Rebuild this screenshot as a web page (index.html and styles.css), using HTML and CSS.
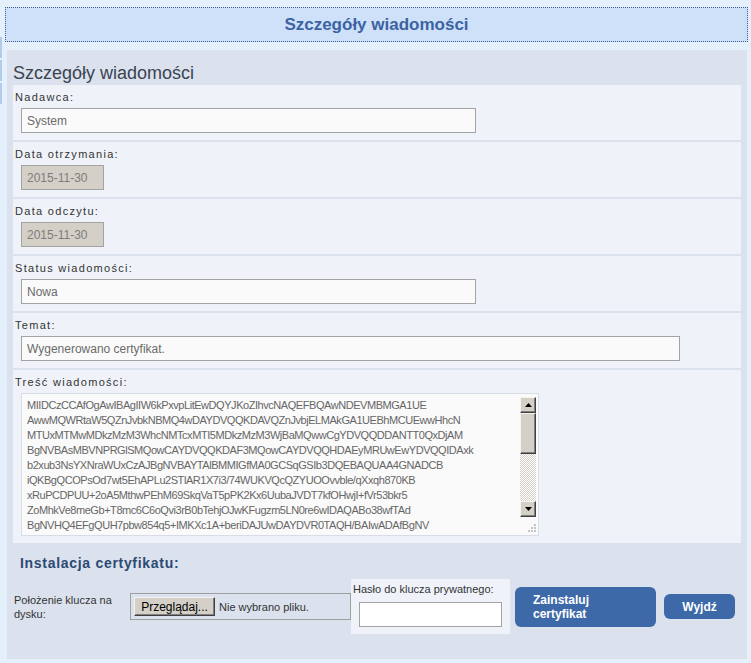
FILE: index.html
```html
<!DOCTYPE html>
<html lang="pl">
<head>
    <meta charset="UTF-8">
    <title>Szczegóły wiadomości</title>
    <link rel="stylesheet" href="styles.css">
</head>
<body>
    <div class="page">
        <div class="side-strip"><span></span><span></span><span></span></div>

        <div class="content">
            <div class="title-bar">
                <h1>Szczegóły wiadomości</h1>
            </div>

            <div class="panel">
                <h2>Szczegóły wiadomości</h2>

                <div class="field">
                    <label>Nadawca:</label>
                    <input class="text-input wide" type="text" value="System" readonly>
                </div>

                <div class="field">
                    <label>Data otrzymania:</label>
                    <input class="text-input date" type="text" value="2015-11-30" readonly>
                </div>

                <div class="field">
                    <label>Data odczytu:</label>
                    <input class="text-input date" type="text" value="2015-11-30" readonly>
                </div>

                <div class="field">
                    <label>Status wiadomości:</label>
                    <input class="text-input wide" type="text" value="Nowa" readonly>
                </div>

                <div class="field">
                    <label>Temat:</label>
                    <input class="text-input wider" type="text" value="Wygenerowano certyfikat." readonly>
                </div>

                <div class="field">
                    <label>Treść wiadomości:</label>
                    <div class="message-box">
                        <div class="message-text">MIIDCzCCAfOgAwIBAgIIW6kPxvpLitEwDQYJKoZIhvcNAQEFBQAwNDEVMBMGA1UE
AwwMQWRtaW5QZnJvbkNBMQ4wDAYDVQQKDAVQZnJvbjELMAkGA1UEBhMCUEwwHhcN
MTUxMTMwMDkzMzM3WhcNMTcxMTI5MDkzMzM3WjBaMQwwCgYDVQQDDANTT0QxDjAM
BgNVBAsMBVNPRGlSMQowCAYDVQQKDAF3MQowCAYDVQQHDAEyMRUwEwYDVQQIDAxk
b2xub3NsYXNraWUxCzAJBgNVBAYTAlBMMIGfMA0GCSqGSIb3DQEBAQUAA4GNADCB
iQKBgQCOPsOd7wt5EhAPLu2STlAR1X7i3/74WUKVQcQZYUOOvvble/qXxqh870KB
xRuPCDPUU+2oA5MthwPEhM69SkqVaT5pPK2Kx6UubaJVDT7kfOHwjI+fVr53bkr5
ZoMhkVe8meGb+T8mc6C6oQvi3rB0bTehjOJwKFugzm5LN0re6wIDAQABo38wfTAd
BgNVHQ4EFgQUH7pbw854q5+IMKXc1A+beriDAJUwDAYDVR0TAQH/BAIwADAfBgNV</div>
                        <div class="scroll-col">
                            <div class="scrollbar">
                                <span class="sb-btn">
                                    <svg width="7" height="4" viewBox="0 0 7 4"><path d="M3.5 0 L7 4 L0 4 Z" fill="#000"/></svg>
                                </span>
                                <span class="sb-thumb"></span>
                                <span class="sb-track"></span>
                                <span class="sb-btn">
                                    <svg width="7" height="4" viewBox="0 0 7 4"><path d="M0 0 L7 0 L3.5 4 Z" fill="#000"/></svg>
                                </span>
                            </div>
                            <div class="grip">
                                <svg width="10" height="10" viewBox="0 0 10 10">
                                    <rect x="8" y="2" width="2" height="2" fill="#c4c4c4"/>
                                    <rect x="5" y="5" width="2" height="2" fill="#c4c4c4"/>
                                    <rect x="8" y="5" width="2" height="2" fill="#c4c4c4"/>
                                    <rect x="2" y="8" width="2" height="2" fill="#c4c4c4"/>
                                    <rect x="5" y="8" width="2" height="2" fill="#c4c4c4"/>
                                    <rect x="8" y="8" width="2" height="2" fill="#c4c4c4"/>
                                </svg>
                            </div>
                        </div>
                    </div>
                </div>

                <!-- Certificate install -->
                <h3>Instalacja certyfikatu:</h3>

                <div class="install-row">
                    <div class="key-label">Położenie klucza na dysku:</div>
                    <div class="file-box">
                        <button class="browse-btn" type="button">Przeglądaj...</button>
                        <span class="file-name">Nie wybrano pliku.</span>
                    </div>
                    <div class="pass-box">
                        <div class="pass-label">Hasło do klucza prywatnego:</div>
                        <input class="pass-input" type="password">
                    </div>
                    <button class="action-btn install" type="button">Zainstaluj certyfikat</button>
                    <button class="action-btn exit" type="button">Wyjdź</button>
                </div>
            </div>
        </div>
    </div>
</body>
</html>
```

FILE: styles.css
```css
/* Global */
* {
    margin: 0;
    padding: 0;
    box-sizing: border-box;
}

body {
    background-color: #e4f0fc;
    font-family: "Liberation Sans", Arial, sans-serif;
    font-size: 12px;
    color: #333;
}

.page {
    display: flex;
    height: 663px;
    overflow: hidden;
}

/* thin strip at the left edge */
.side-strip {
    width: 2px;
    margin-top: 37px;
    display: flex;
    flex-direction: column;
    gap: 2px;
}

.side-strip span {
    display: block;
    height: 21px;
    background-color: #b4cce8;
}

.content {
    flex: 1;
    margin-left: 3px;
}

/* Title bar */
.title-bar {
    margin: 7px 3px 0 0;
    height: 35px;
    border: 1px dotted #3f5f90;
    background-color: #cee1f8;
    display: flex;
    align-items: center;
    justify-content: center;
}

.title-bar h1 {
    font-size: 17px;
    font-weight: bold;
    color: #3b63a3;
}

/* Main panel */
.panel {
    margin: 8px 4px 0 2px;
    background-color: #dbe2ed;
    padding: 6px 6px 25px 6px;
}

.panel h2 {
    margin-top: 5px;
    font-size: 18px;
    font-weight: normal;
    line-height: 24px;
    color: #3a4352;
}

.field {
    background-color: #eff3f9;
    padding: 4px 8px 7px 8px;
    margin-bottom: 2px;
    display: flex;
    flex-direction: column;
    align-items: flex-start;
}

.field label {
    font-size: 11px;
    letter-spacing: 1.3px;
    line-height: 16px;
    margin: 0 0 3px -6px;
    color: #333;
}

.text-input {
    height: 25px;
    border: 1px solid #a3a3a3;
    background-color: #fafafa;
    padding: 0 5px;
    font-family: "Liberation Sans", Arial, sans-serif;
    font-size: 12px;
    color: #6b6b6b;
    outline: none;
}

.text-input.wide {
    width: 455px;
}

.text-input.wider {
    width: 659px;
}

.text-input.date {
    width: 83px;
    background-color: #d4d0c8;
    color: #7c7c7c;
}

/* Message box with classic scrollbar */
.message-box {
    width: 518px;
    height: 143px;
    border: 1px solid #d6dde7;
    background-color: #fafafa;
    display: flex;
    overflow: hidden;
}

.message-text {
    flex: 1;
    padding: 4px 0 0 5px;
    white-space: pre;
    overflow: hidden;
    font-size: 11px;
    letter-spacing: -0.45px;
    line-height: 15px;
    color: #666;
}

.scroll-col {
    width: 16px;
    margin: 3px 2px 0 0;
    display: flex;
    flex-direction: column;
}

.scrollbar {
    height: 120px;
    display: flex;
    flex-direction: column;
}

.sb-btn,
.sb-thumb {
    display: flex;
    align-items: center;
    justify-content: center;
    background-color: #d4d0c8;
    border: 1px solid;
    border-color: #f4f3f0 #404040 #404040 #f4f3f0;
    box-shadow: inset -1px -1px 0 #808080;
}

.sb-btn {
    height: 16px;
}

.sb-thumb {
    height: 41px;
}

.sb-track {
    flex: 1;
    background-color: #fff;
    background-image: repeating-conic-gradient(#d4d0c8 0 25%, #fff 0 50%);
    background-size: 2px 2px;
}

.grip {
    flex: 1;
    display: flex;
    align-items: flex-end;
    justify-content: flex-end;
    padding: 0 0 3px 0;
}

/* Certificate install */
.panel h3 {
    margin: 12px 0 8px 7px;
    font-size: 14px;
    font-weight: bold;
    letter-spacing: 0.7px;
    line-height: 16px;
    color: #2b4a73;
}

.install-row {
    display: flex;
    align-items: center;
    margin-left: 1px;
    font-size: 11px;
}

.key-label {
    width: 116px;
    padding-right: 10px;
    line-height: 14px;
    color: #333;
}

.file-box {
    width: 221px;
    height: 27px;
    border: 1px solid #a0a0a0;
    display: flex;
    align-items: center;
    padding-left: 3px;
    gap: 4px;
}

.browse-btn {
    height: 19px;
    width: 81px;
    font-family: "Liberation Sans", Arial, sans-serif;
    font-size: 12px;
    color: #000;
    background-color: #d4d0c8;
    border: 1px solid;
    border-color: #f4f3f0 #404040 #404040 #f4f3f0;
    box-shadow: inset -1px -1px 0 #808080;
}

.file-name {
    color: #333;
}

.pass-box {
    width: 159px;
    height: 55px;
    background-color: #eff3f9;
    padding: 2px 8px 0 8px;
}

.pass-label {
    line-height: 16px;
    margin: 0 0 5px -6px;
    color: #333;
    white-space: nowrap;
}

.pass-input {
    width: 143px;
    height: 25px;
    border: 1px solid #a3a3a3;
    background-color: #fff;
    outline: none;
}

.action-btn {
    background-color: #3e69a9;
    color: #fff;
    border: none;
    border-radius: 6px;
    font-family: "Liberation Sans", Arial, sans-serif;
    font-size: 12px;
    font-weight: bold;
    line-height: 14px;
}

.action-btn.install {
    width: 141px;
    height: 40px;
    margin-left: 5px;
    padding: 0 40px 0 18px;
    text-align: left;
}

.action-btn.exit {
    width: 71px;
    height: 25px;
    margin-left: 8px;
    text-align: center;
}
```
